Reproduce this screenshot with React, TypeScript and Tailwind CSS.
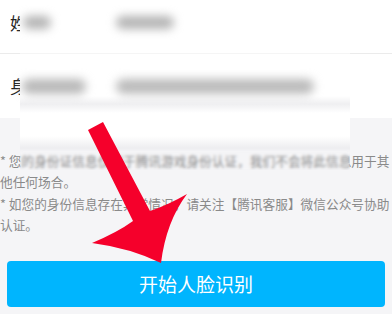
const notes = [
  "* 您的身份证信息仅用于腾讯游戏身份认证，我们不会将此信息用于其",
  "他任何场合。",
  "* 如您的身份信息存在异常情况，请关注【腾讯客服】微信公众号协助",
  "认证。",
];

function Arrow() {
  return (
    <svg
      className="absolute left-0 top-0 pointer-events-none"
      width="392"
      height="314"
      viewBox="0 0 392 314"
    >
      <path
        d="M 88 130 L 103 122 L 150 211 Q 168 205 187 194 Q 166 222 161 263 Q 130 248 92 243 Q 118 232 133 221 Z"
        fill="#f5002b"
      />
    </svg>
  );
}

// blurred-out values covering the form
function Mosaic() {
  return (
    <div className="absolute left-[20px] top-0 w-[330px] flex flex-col">
      <div className="h-[152px] flex flex-col bg-[linear-gradient(to_bottom,#ffffff_0px,#ffffff_96px,#efeff1_104px,#ffffff_113px,#ffffff_136px,#ededf0_148px,rgba(245,245,247,0)_152px)]">
        <div className="h-[54px] flex items-center gap-[65px] pl-[3px] pb-[8px] border-b border-[#f5f5f5]">
          <div className="w-[28px] h-[13px] rounded-full bg-[#b3b3b3] blur-[5px]" />
          <div className="w-[58px] h-[13px] rounded-full bg-[#b3b3b3] blur-[5px]" />
        </div>
        <div className="h-[64px] flex items-center gap-[30px] pl-[2px]">
          <div className="w-[64px] h-[15px] rounded-full bg-[#b8b8b8] blur-[5px]" />
          <div className="w-[198px] h-[15px] rounded-full bg-[#bababa] blur-[5px]" />
        </div>
      </div>
      <div className="h-[20px] -mt-[2px] backdrop-blur-[1.6px]" />
    </div>
  );
}

export default function App() {
  return (
    <div className="relative w-[392px] h-[314px] overflow-hidden bg-[#f5f5f7] font-['Noto_Sans_CJK_SC','Noto_Sans',sans-serif]">
      <section className="bg-white h-[118px]">
        <div className="h-[54px] border-b border-[#ebebeb] flex items-center pl-[10px] pb-[8px] text-[17px] text-[#222]">
          姓名
        </div>
        <div className="h-[64px] flex items-center pl-[10px] text-[17px] text-[#222]">
          身份证号
        </div>
      </section>

      <div className="pt-[32px] text-[12.7px] leading-[21.3px] text-[#8a8a8a]">
        {notes.map((l) => (
          <div key={l} className="whitespace-nowrap">
            {l}
          </div>
        ))}
      </div>

      <div className="mt-[26px] mx-[7px] h-[46px] rounded-[4px] bg-[#00b5fe] flex items-center justify-center text-white text-[19px]">
        开始人脸识别
      </div>

      <Mosaic />
      <Arrow />
    </div>
  );
}
